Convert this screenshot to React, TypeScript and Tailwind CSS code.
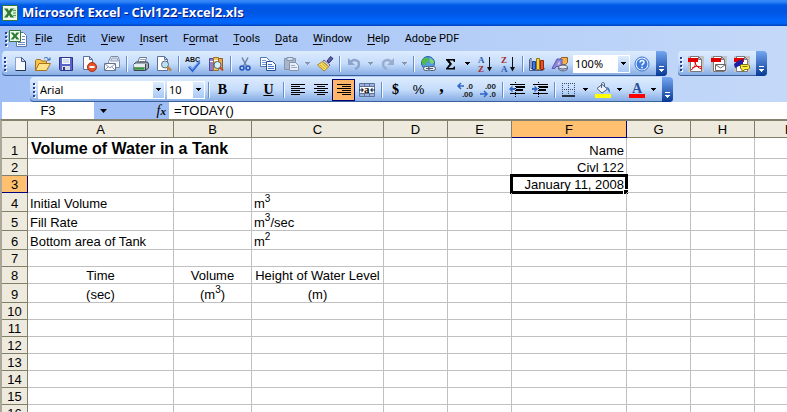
import React from "react";

type Kids = { children: React.ReactNode };

/* ---------- icons ---------- */

function Icon({ children, size = 16 }: Kids & { size?: number }) {
  return (
    <svg width={size} height={size} viewBox="0 0 16 16" fill="none" aria-hidden="true" className="shrink-0 overflow-visible">
      {children}
    </svg>
  );
}

const NewIcon = () => (
  <Icon>
    <path d="M3.5 1.5h6l4 4v9h-10z" fill="#f6faff" stroke="#8ba3c9" />
    <path d="M13.5 5v9.5h-10" stroke="#26344f" />
    <path d="M9.5 1.5v4h4z" fill="#c9d8ee" stroke="#44597f" />
  </Icon>
);
const OpenIcon = () => (
  <Icon>
    <path d="M.5 14.5v-10l1-1h4l1 1.500h5v3" fill="#f5c64a" stroke="#a8701a" />
    <path d="M.5 14.500 4 7.500h11.500l-4 7z" fill="#ffe28a" stroke="#a8701a" />
    <path d="M9 2.500c2-1.800 4-1 5 1.500M12 4h3V1.500" stroke="#2c5b9e" />
  </Icon>
);
const SaveIcon = () => (
  <Icon>
    <path d="M1.500 1.500h13v13h-12l-1-1z" fill="#5962c8" stroke="#30358c" />
    <path d="M4 2h8v6H4z" fill="#f4f7ff" />
    <path d="M5 4h6M5 6h6" stroke="#b6c3e6" />
    <path d="M4 10h8v4H4z" fill="#d7d9e4" />
    <path d="M5 11h2v3H5z" fill="#30358c" />
  </Icon>
);
const PermissionIcon = () => (
  <Icon>
    <path d="M2.500.500h6l3 3v10h-9z M8.500.500v3h3" fill="#fff" stroke="#5b719c" />
    <circle cx="11" cy="11" r="4.500" fill="#e3542c" stroke="#b02d10" />
    <path d="M8.500 11h5" stroke="#fff" strokeWidth="2" />
  </Icon>
);
const MailIcon = () => (
  <Icon>
    <path d="M4.500 5.500 7 .500h7l1.500 4v7H4.500z" fill="#f4f7fd" stroke="#7d8ba7" />
    <path d="M6.500 5 8 2h5l1.500 3z" fill="#d3deef" stroke="#93a2be" />
    <path d="M.500 7.500h11v7H.500z" fill="#fff" stroke="#65738f" />
    <path d="m1 8 5 4 5-4M1 14l3.500-3.500M11 14l-3.500-3.500" stroke="#8896b2" />
  </Icon>
);
const PrintIcon = () => (
  <Icon>
    <path d="M4.500 7 6.500 1.500h7L12 7z" fill="#fff" stroke="#6b7893" />
    <path d="M7 3.500h5M6.500 5.500h5" stroke="#9aa6bd" />
    <path d="M1 8l2.500-2h11L15.500 8v4l-3 2.500H1z" fill="#9ea9b4" stroke="#39434f" />
    <path d="M1 8h11.500v3H1z" fill="#e6ebee" />
    <path d="M2 12.500h9" stroke="#2f9a2a" strokeWidth="2" />
    <path d="M12.500 8v6" stroke="#39434f" />
  </Icon>
);
const PreviewIcon = () => (
  <Icon>
    <path d="M1.500.500h7l3 3v11h-10z M8.500.500v3h3" fill="#fff" stroke="#5b719c" />
    <circle cx="9" cy="8.500" r="3.500" fill="#b9e0f3" stroke="#5a6c7b" />
    <path d="m11.500 11 3.500 3.500" stroke="#c58436" strokeWidth="2.500" />
  </Icon>
);
const SpellIcon = () => (
  <Icon>
    <text x="0" y="6" fontSize="7" fontWeight="700" fill="#111" className="font-['Liberation_Sans',sans-serif]">ABC</text>
    <path d="m4 10.500 3.500 4L14.500 6" stroke="#2c66d4" strokeWidth="2.500" />
    <path d="m4 10 3.500 3.500L14 5.500" stroke="#7eabf3" />
  </Icon>
);
const ResearchIcon = () => (
  <Icon>
    <path d="M1.500 2.500h4v12h-4z" fill="#8c7fd0" stroke="#574a9c" />
    <path d="M5.500 1.500h5v13h-5z" fill="#f0c763" stroke="#a07322" />
    <path d="M10.500 2.500h4v10h-4z" fill="#e9a64d" stroke="#94601f" />
    <path d="M2 5.500h3M6 4.500h4" stroke="#fff" />
    <circle cx="9.500" cy="9" r="3.500" fill="#d6effa" stroke="#51606e" />
    <path d="m12 11.500 3 3" stroke="#c04d21" strokeWidth="2" />
  </Icon>
);
const CutIcon = () => (
  <Icon>
    <path d="M5 1.500 9.500 10M11 1.500 6.500 10" stroke="#6f82a5" strokeWidth="1.500" />
    <circle cx="5" cy="12" r="2" stroke="#1f55b8" strokeWidth="1.500" />
    <circle cx="11" cy="12" r="2" stroke="#1f55b8" strokeWidth="1.500" />
  </Icon>
);
const CopyIcon = () => (
  <Icon>
    <path d="M.500 1.500h6l3 3v6h-9z" fill="#fff" stroke="#5177bd" />
    <path d="M2 4.500h4M2 6.500h5M2 8.500h5" stroke="#6f94d2" />
    <path d="M6.500 5.500h6l3 3v6h-9z" fill="#fff" stroke="#274f9c" />
    <path d="M8 8.500h4M8 10.500h6M8 12.500h6" stroke="#4878c8" />
  </Icon>
);
const PasteIcon = () => (
  <Icon>
    <path d="M1.500 2.500h11v11h-11z" fill="#a9b5ca" stroke="#8593ad" />
    <path d="M4 1.500h6v3H4z" fill="#d7deea" stroke="#8593ad" />
    <path d="M6.500 6.500h6l3 3v5h-9z" fill="#e8edf6" stroke="#8593ad" />
    <path d="M8 9.500h4M8 11.500h6" stroke="#9dabc4" />
  </Icon>
);
const PainterIcon = () => (
  <Icon>
    <path d="m10 5 3.500-4.500L16 2.500 12 7z" fill="#5a5aa8" stroke="#33336e" />
    <path d="m7 4 6 5-1.500 1.500-6-5z" fill="#d9d9e6" stroke="#66668c" />
    <path d="M5.500 5.500 .500 9l6.500 6c2-1 3.500-3 4.500-4.500z" fill="#f7dd62" stroke="#a8842a" />
    <path d="m3 9 5 4M5 7.500l5 4" stroke="#cfa635" />
  </Icon>
);
const UndoIcon = () => (
  <Icon>
    <path d="M4 7c3-5 9-3 9 1 0 2-1 4-4 5" stroke="#8fa4cb" strokeWidth="2.500" />
    <path d="M2 2v7h7z" fill="#8fa4cb" />
  </Icon>
);
const RedoIcon = () => (
  <Icon>
    <path d="M12 7C9 2 3 4 3 8c0 2 1 4 4 5" stroke="#9aaccf" strokeWidth="2.500" />
    <path d="M14 2v7H7z" fill="#9aaccf" />
  </Icon>
);
const LinkIcon = () => (
  <Icon>
    <circle cx="8" cy="7" r="6.500" fill="#4f9be6" stroke="#2560a8" />
    <path d="M3 3c3-2.500 6-1 6 1S6 6 6 8s-3 1-4-1 0-3 1-4z" fill="#51b948" />
    <path d="M10 2c3 1 4 3 4 5l-3 1-1.500-3z" fill="#7ed567" />
    <rect x="3.500" y="10.500" width="6" height="4" rx="2" fill="#e5ebf3" stroke="#4c5b70" />
    <rect x="8.500" y="10.500" width="7" height="4" rx="2" fill="#e5ebf3" stroke="#4c5b70" />
    <path d="M6 12.500h7" stroke="#4c5b70" />
  </Icon>
);
const SumIcon = () => (
  <Icon>
    <path d="M3 3h9v3h-1l-1-1.500H6.500L9 8l-3.500 4H10l1-1.500h1V13.500H3V12.500L6.500 8 3 4z" fill="#000" />
  </Icon>
);
const SortIcon = ({ top, bottom, topFill, bottomFill }: { top: string; bottom: string; topFill: string; bottomFill: string }) => (
  <Icon>
    <g className="font-['Liberation_Serif',serif]" fontSize="9" fontWeight="700">
      <text x="1" y="7" fill={topFill}>{top}</text>
      <text x="1" y="16" fill={bottomFill}>{bottom}</text>
    </g>
    <path d="M12.500 1v11" stroke="#111" />
    <path d="M10 11h5l-2.500 4.500z" fill="#111" />
  </Icon>
);
const ChartIcon = () => (
  <Icon>
    <path d="M.500 3.500 2 2v10.500h13.500L14 14.500H.500z" fill="#dbe4f5" stroke="#4a5d8a" />
    <path d="M3.500 5.500h3v8h-3z" fill="#3f77df" stroke="#1d3f92" />
    <path d="M7.500 2.500h3v11h-3z" fill="#f8d13e" stroke="#9b7413" />
    <path d="M11.500 4.500h3v9h-3z" fill="#e8552d" stroke="#92290f" />
  </Icon>
);
const DrawIcon = () => (
  <Icon>
    <path d="M7.500 3.500 9.500 1.500h6v5l-2 2h-6z" fill="#f0b14b" stroke="#94601f" />
    <path d="m5 3-5 9.500h3l1-2h3v2h3V3z" fill="#8c85d8" stroke="#5f59b3" />
    <path d="M5.500 8.500 7.500 5v3.500z" fill="#e6ecfa" />
    <path d="M6.500 11v2c1.500 2.500 7.500 2.500 9 0v-2" fill="#b7c2d8" stroke="#56617a" />
    <ellipse cx="11" cy="11" rx="4.500" ry="2" fill="#e3e8f3" stroke="#56617a" />
  </Icon>
);
const HelpIcon = () => (
  <Icon>
    <circle cx="8" cy="8" r="7" fill="#f2f7ff" stroke="#3a6fc8" />
    <circle cx="8" cy="8" r="5.500" fill="#3e7de0" />
    <path d="M6 6.500C6 3.500 10.500 4 10 6.500 9.800 7.800 8 8 8 9.500" stroke="#fff" strokeWidth="1.500" />
    <path d="M7.200 10.800h1.600v1.500H7.200z" fill="#fff" />
  </Icon>
);
const AlignIcon = ({ d }: { d: string }) => (
  <Icon>
    <path d={d} stroke="#000" shapeRendering="crispEdges" />
  </Icon>
);
const MergeIcon = () => (
  <Icon>
    <path d="M.500 1.500h15v13H.500z" fill="#fff" stroke="#5c7197" />
    <path d="M1 3h14M1 13h14" stroke="#9cb2dc" strokeWidth="2" />
    <path d="M5.500 1v3M10.500 1v3M5.500 12v3M10.500 12v3M1 4.500h14M1 11.500h14" stroke="#5c7197" />
    <path d="M0 8h4M12 8h4" stroke="#1f2d4f" />
    <path d="M2.500 5.500 5 8l-2.500 2.500zM13.500 5.500 11 8l2.500 2.500z" fill="#1f2d4f" />
    <text x="5" y="11" fontSize="11" fontWeight="700" fill="#111" className="font-['Liberation_Serif',serif]">a</text>
  </Icon>
);
const DecimalIcon = ({ top, bottom, left }: { top: string; bottom: string; left: boolean }) => (
  <Icon>
    <g className="font-['Liberation_Sans',sans-serif]" fontSize="8" fontWeight="700" fill="#222" textAnchor="end">
      <text x="16" y="7">{top}</text>
      <text x="16" y="15">{bottom}</text>
    </g>
    {left ? (
      <path d="M7 4H1.500M4 1 1 4l3 3" stroke="#2f67c9" strokeWidth="1.500" />
    ) : (
      <path d="M0 12h6.500M4 9l3 3-3 3" stroke="#2f67c9" strokeWidth="1.500" />
    )}
  </Icon>
);
const IndentIcon = ({ out }: { out?: boolean }) => (
  <Icon>
    <path d="M1 2.500h15M7 4.500h9M7 5.500h9M7 7.500h7M7 8.500h7M1 11.500h15" stroke="#000" shapeRendering="crispEdges" />
    <path d="M6.500 0v16" stroke="#000" strokeDasharray="1 1" />
    <path d={out ? "M6 7H2" : "M0 7h3"} stroke="#2f67c9" strokeWidth="2" />
    <path d={out ? "M3.500 3.500 0 7l3.500 3.500z" : "M2.500 3.500 6 7l-3.500 3.500z"} fill="#2f67c9" />
  </Icon>
);
const BordersIcon = () => (
  <Icon>
    <path d="M1.500 1v12M7.500 1v12M13.500 1v12M1 1.500h13M1 7.500h13" stroke="#3b4c6e" strokeDasharray="1 1" />
    <path d="M1 14h13" stroke="#000" strokeWidth="1.500" />
  </Icon>
);
const FillIcon = () => (
  <Icon>
    <path d="m2 6.500 5-4 5.500 4.500L7 11z" fill="#eef3fb" stroke="#4e5f80" />
    <path d="M6.500 6V2c0-2 3-2 3 0v2" stroke="#4e5f80" />
    <path d="M11 5c3 0 4 2 4 6-1-1-2-2-2.500-4z" fill="#3f73d0" />
    <path d="M0 12h16v4H0z" fill="#ff0" />
  </Icon>
);
const FontColorIcon = () => (
  <Icon>
    <text x="8" y="11" fontSize="14" fontWeight="700" fill="#2d4f97" textAnchor="middle" className="font-['Liberation_Serif',serif]">A</text>
    <path d="M0 12h16v4H0z" fill="#f00" />
  </Icon>
);
const PdfIcon = ({ kind }: { kind: "pdf" | "mail" | "review" }) => (
  <Icon>
    <path d="M0 0h16v16H0z" fill="#c3c3c3" />
    <path d="M2.500.500h8l3 3v12h-11z M10.500.500v3h3" fill="#fff" stroke="#77777c" />
    <path d="M0 2h10v4H0z" fill="#e00000" />
    {kind === "pdf" && <path d="M7 6c1 4 3 6 7 7M7 6c1 4-1 6-4 8M4 12c3-2 6-2 10-1" stroke="#e00000" />}
    {kind === "mail" && (
      <>
        <path d="M4.500 8.500h10v6h-10z" fill="#fff" stroke="#666" />
        <path d="m5 9 4.500 3L14 9" stroke="#666" />
      </>
    )}
    {kind === "review" && (
      <>
        <path d="m0 8 4-3 5-2v6L5 10l-4 2z" fill="#1a1fa8" />
        <path d="M7 8.500h7l1.500 1.500v2L14 13.500h-3L8 15.500v-2l-1.500-1V10z" fill="#ffef3a" stroke="#7c7313" />
        <path d="M8.500 10.500h5" stroke="#7c7313" />
      </>
    )}
  </Icon>
);
const ExcelIcon = () => (
  <Icon>
    <path d="M.500.500h15v15H.500z" fill="#f3f8ee" stroke="#2f7a35" />
    <path d="M10 3h4v10h-4" fill="#d3e6cf" />
    <path d="M10 5.500h4M10 8h4M10 10.500h4" stroke="#5aa05c" />
    <path d="M2 3h9v10H2z" fill="#e3f1df" />
    <path d="M2 3.500h3.500L7 6l1.500-2.500H12L8.500 8l3.500 4.500H8.500L7 10l-1.500 2.500H2L5.500 8z" fill="#2c7c34" />
  </Icon>
);
const MenuExcelIcon = () => (
  <svg width="18" height="17" viewBox="0 0 18 17" fill="none" aria-hidden="true">
    <path d="M7.500 2.500h7l3 3v11h-10z" fill="#fff" stroke="#5876ac" />
    <path d="M13 6.500h3M13 9.500h3M9 12.500h7M9 14.500h7" stroke="#6b8ac0" />
    <path d="M.500.500h11v11H.500z" fill="#f3f8ee" stroke="#2f7a35" />
    <path d="M1.500 2.500h3L6 4.500l1.500-2h3L7.500 6l3 3.500h-3L6 7.500l-1.500 2h-3L4.500 6z" fill="#2c7c34" />
  </svg>
);

/* ---------- toolbar parts ---------- */

function Grip({ wide }: { wide?: boolean }) {
  return (
    <div className={`${wide ? "w-2" : "w-1.5"} flex h-full shrink-0 flex-col items-center justify-center gap-0.5`}>
      {[0, 1, 2, 3].map((n) => (
        <i key={n} className="size-0.5 bg-[#27418e] shadow-[1px_1px_0_#fff]" />
      ))}
    </div>
  );
}

function Sep() {
  return (
    <div className="flex w-1.5 shrink-0 justify-center">
      <i className="h-4 w-px bg-[#6a8ccb] shadow-[1px_0_0_#f1f9ff]" />
    </div>
  );
}

function Tool({ label, active, children }: Kids & { label: string; active?: boolean }) {
  return (
    <button
      type="button"
      aria-label={label}
      aria-pressed={active}
      className={`flex h-[22px] w-[23px] shrink-0 items-center justify-center ${active ? "border border-[#000080] bg-[#ffb668]" : ""}`}
    >
      {children}
    </button>
  );
}

function Triangle({ color = "#000" }: { color?: string }) {
  return (
    <svg width="5" height="3" viewBox="0 0 5 3" aria-hidden="true" shapeRendering="crispEdges">
      <path d="M0 0h5v1H4v1H3v1H2V2H1V1H0z" fill={color} />
    </svg>
  );
}

function Drop({ label, dim }: { label: string; dim?: boolean }) {
  return (
    <button type="button" aria-label={label} className="flex h-[22px] w-[11px] shrink-0 items-center justify-center">
      <Triangle color={dim ? "#8794ae" : "#000"} />
    </button>
  );
}

function Combo({ label, value, width }: { label: string; value: string; width: string }) {
  return (
    <label className={`relative flex h-[18px] shrink-0 items-center bg-white ${width}`}>
      <select
        aria-label={label}
        defaultValue={value}
        className="h-full w-full appearance-none bg-transparent pl-0.5 font-['Noto_Sans',sans-serif] text-[11px] leading-4"
      >
        <option>{value}</option>
      </select>
      <span className="pointer-events-none absolute inset-y-px right-px flex w-[11px] items-center justify-center bg-linear-to-b from-[#ddecfe] to-[#a9c8f5]">
        <Triangle />
      </span>
    </label>
  );
}

function Cap() {
  return (
    <button
      type="button"
      aria-label="Toolbar options"
      className="flex h-full w-[11px] shrink-0 flex-col items-center justify-end gap-0.5 rounded-r-sm bg-linear-to-b from-[#75a6f1] to-[#053995] pb-1"
    >
      <i className="h-px w-[5px] bg-white" />
      <Triangle color="#fff" />
    </button>
  );
}

function Bar({ label, children }: Kids & { label: string }) {
  return (
    <div
      role="toolbar"
      aria-label={label}
      className="flex h-[25px] shrink-0 items-center rounded-sm bg-linear-to-b from-[#ddecfe] via-[#c5dcfb] to-[#81a9e2] shadow-[inset_0_-1px_0_#3b619c]"
    >
      {children}
    </div>
  );
}

/* ---------- data ---------- */

const menus: [string, string, string][] = [
  ["", "F", "ile"],
  ["", "E", "dit"],
  ["", "V", "iew"],
  ["", "I", "nsert"],
  ["F", "o", "rmat"],
  ["", "T", "ools"],
  ["", "D", "ata"],
  ["", "W", "indow"],
  ["", "H", "elp"],
  ["Ado", "b", "e PDF"],
];

const columns = [
  { name: "A", width: "w-[146px]" },
  { name: "B", width: "w-[78px]" },
  { name: "C", width: "w-[132px]" },
  { name: "D", width: "w-[64px]" },
  { name: "E", width: "w-[64px]" },
  { name: "F", width: "w-[115px]" },
  { name: "G", width: "w-[64px]" },
  { name: "H", width: "w-[64px]" },
  { name: "I", width: "w-[64px]" },
];

const Sup = ({ children }: Kids) => <sup className="relative -top-[6px] align-baseline text-[10px] leading-none">{children}</sup>;

const cells: Record<string, React.ReactNode> = {
  A1: "Volume of Water in a Tank",
  F1: "Name",
  F2: "Civl 122",
  F3: "January 11, 2008",
  A4: "Initial Volume",
  A5: "Fill Rate",
  A6: "Bottom area of Tank",
  C4: <>m<Sup>3</Sup></>,
  C5: <>m<Sup>3</Sup>/sec</>,
  C6: <>m<Sup>2</Sup></>,
  A8: "Time",
  B8: "Volume",
  C8: "Height of Water Level",
  A9: "(sec)",
  B9: <>(m<Sup>3</Sup>)</>,
  C9: "(m)",
};

const rowHeight = (r: number) => {
  if (r === 1) return "h-[21px]";
  return r === 4 || r === 5 || r === 6 || r === 9 ? "h-[19px]" : "h-[17px]";
};

function Cell({ col, row }: { col: string; row: number }) {
  const id = col + row;
  const title = id === "A1";
  const align = col === "F" ? "text-right" : row > 7 ? "text-center" : "text-left";
  return (
    <td
      colSpan={title ? 2 : 1}
      className={`relative border-r border-b border-[#c0c0c0] px-0.5 py-0 align-bottom whitespace-nowrap ${align} ${
        title ? "text-base leading-[18px] font-bold" : "leading-[14px]"
      }`}
    >
      {title ? <span className="pl-px">{cells[id]}</span> : cells[id]}
      {id === "F3" && (
        <span className="pointer-events-none absolute -inset-0.5 border-[3px] border-black">
          <i className="absolute -right-[3px] -bottom-[3px] size-[5px] border-t border-l border-white bg-black" />
        </span>
      )}
    </td>
  );
}

/* ---------- page ---------- */

export default function App() {
  return (
    <div className="flex h-screen flex-col overflow-hidden bg-white font-['Liberation_Sans',Arial,sans-serif] text-[13px] text-black">
      <header className="flex h-[26px] shrink-0 items-center gap-1 bg-[linear-gradient(#3c8cf8_0,#2a80f5_8%,#0058e6_20%,#0055e3_50%,#0066ff_80%,#0062f5_90%,#0042b8_100%)] pl-0.5">
        <ExcelIcon />
        <h1 className="font-['Open_Sans',sans-serif] text-[13px] font-bold text-white [text-shadow:1px_1px_0_#0a1883]">
          Microsoft Excel - Civl122-Excel2.xls
        </h1>
      </header>

      <div className="shrink-0 bg-linear-to-r from-[#9ebef5] to-[#c4d9f9]">
        <nav className="flex h-[25px] items-center pl-[3px] font-['Roboto',sans-serif] text-[11px]">
          <Grip />
          <MenuExcelIcon />
          <div className="flex">
            {menus.map(([a, b, c]) => (
              <button type="button" key={a + b + c} className="pl-2 pr-[7px] leading-5">
                {a}
                <u className="underline-offset-2">{b}</u>
                {c}
              </button>
            ))}
          </div>
        </nav>

        <div className="flex h-[26px] gap-[11px] pl-0.5">
          <Bar label="Standard">
            <Grip />
            <Tool label="New"><NewIcon /></Tool>
            <Tool label="Open"><OpenIcon /></Tool>
            <Tool label="Save"><SaveIcon /></Tool>
            <Tool label="Permission"><PermissionIcon /></Tool>
            <Tool label="E-mail"><MailIcon /></Tool>
            <Sep />
            <Tool label="Print"><PrintIcon /></Tool>
            <Tool label="Print Preview"><PreviewIcon /></Tool>
            <Sep />
            <Tool label="Spelling"><SpellIcon /></Tool>
            <Tool label="Research"><ResearchIcon /></Tool>
            <Sep />
            <Tool label="Cut"><CutIcon /></Tool>
            <Tool label="Copy"><CopyIcon /></Tool>
            <Tool label="Paste"><PasteIcon /></Tool>
            <Drop label="Paste options" dim />
            <Tool label="Format Painter"><PainterIcon /></Tool>
            <Sep />
            <Tool label="Undo"><UndoIcon /></Tool>
            <Drop label="Undo history" dim />
            <Tool label="Redo"><RedoIcon /></Tool>
            <Drop label="Redo history" dim />
            <Sep />
            <Tool label="Insert Hyperlink"><LinkIcon /></Tool>
            <Tool label="AutoSum"><SumIcon /></Tool>
            <Drop label="AutoSum options" />
            <Tool label="Sort Ascending"><SortIcon top="A" bottom="Z" topFill="#2f5cae" bottomFill="#a32a2a" /></Tool>
            <Tool label="Sort Descending"><SortIcon top="Z" bottom="A" topFill="#a32a2a" bottomFill="#2f5cae" /></Tool>
            <Sep />
            <Tool label="Chart Wizard"><ChartIcon /></Tool>
            <Tool label="Drawing"><DrawIcon /></Tool>
            <div className="w-0.5 shrink-0" />
            <Combo label="Zoom" value="100%" width="w-[57px]" />
            <Tool label="Help"><HelpIcon /></Tool>
            <div className="w-[3px] shrink-0" />
            <Cap />
          </Bar>
          <Bar label="PDFMaker">
            <Grip />
            <Tool label="Convert to Adobe PDF"><PdfIcon kind="pdf" /></Tool>
            <Tool label="Convert and e-mail"><PdfIcon kind="mail" /></Tool>
            <Tool label="Convert and review"><PdfIcon kind="review" /></Tool>
            <div className="w-[3px] shrink-0" />
            <Cap />
          </Bar>
        </div>

        <div className="flex pl-[30px]">
          <Bar label="Formatting">
            <Grip wide />
            <Combo label="Font" value="Arial" width="w-[127px]" />
            <div className="w-0.5 shrink-0" />
            <Combo label="Font size" value="10" width="w-[38px]" />
            <Sep />
            <Tool label="Bold"><b className="font-['Liberation_Serif',serif] text-sm">B</b></Tool>
            <Tool label="Italic"><i className="font-['Liberation_Serif',serif] text-sm font-bold">I</i></Tool>
            <Tool label="Underline"><u className="font-['Liberation_Serif',serif] text-sm font-bold">U</u></Tool>
            <Sep />
            <Tool label="Align Left"><AlignIcon d="M1 2.500h14M1 4.500h9M1 6.500h14M1 8.500h9M1 10.500h14M1 12.500h9" /></Tool>
            <Tool label="Center"><AlignIcon d="M1 2.500h14M4 4.500h8M1 6.500h14M4 8.500h8M1 10.500h14M4 12.500h8" /></Tool>
            <Tool label="Align Right" active><AlignIcon d="M1 2.500h14M6 4.500h9M1 6.500h14M6 8.500h9M1 10.500h14M6 12.500h9" /></Tool>
            <Tool label="Merge and Center"><MergeIcon /></Tool>
            <Sep />
            <Tool label="Currency Style"><b className="font-['Liberation_Serif',serif] text-sm">$</b></Tool>
            <Tool label="Percent Style"><span className="font-['Liberation_Sans',sans-serif] text-[13px]">%</span></Tool>
            <Tool label="Comma Style"><b className="pb-2 font-['Liberation_Serif',serif] text-lg leading-3">,</b></Tool>
            <Tool label="Increase Decimal"><DecimalIcon top=".0" bottom=".00" left /></Tool>
            <Tool label="Decrease Decimal"><DecimalIcon top=".00" bottom=".0" left={false} /></Tool>
            <Sep />
            <Tool label="Decrease Indent"><IndentIcon out /></Tool>
            <Tool label="Increase Indent"><IndentIcon /></Tool>
            <Sep />
            <Tool label="Borders"><BordersIcon /></Tool>
            <Drop label="Border options" />
            <Tool label="Fill Color"><FillIcon /></Tool>
            <Drop label="Fill options" />
            <Tool label="Font Color"><FontColorIcon /></Tool>
            <Drop label="Font colour options" />
            <div className="w-[3px] shrink-0" />
            <Cap />
          </Bar>
        </div>
      </div>

      <div className="flex h-[17px] shrink-0 bg-[#9ebef5] pl-0.5">
        <input aria-label="Name Box" defaultValue="F3" className="w-[92px] bg-white text-center outline-none" />
        <button type="button" aria-label="Named cells" className="flex w-[18px] items-center justify-center">
          <svg width="7" height="4" viewBox="0 0 7 4" aria-hidden="true"><path d="M0 0h7L3.500 4z" fill="#000" /></svg>
        </button>
        <button type="button" aria-label="Insert Function" className="w-[57px] pr-[3px] text-right font-['Liberation_Serif',serif] text-sm leading-4 italic">
          f<span className="text-[11px] font-bold">x</span>
        </button>
        <input aria-label="Formula" defaultValue="=TODAY()" className="min-w-0 grow bg-white pl-[5px] outline-none" />
      </div>

      <main className="min-h-0 grow overflow-hidden border-t-2 border-l-2 border-t-[#85816f] border-l-[#aca899]">
        <table className="w-[817px] table-fixed border-separate border-spacing-0">
          <colgroup>
            <col className="w-[26px]" />
            {columns.map((c) => (
              <col key={c.name} className={c.width} />
            ))}
          </colgroup>
          <thead>
            <tr className="h-[17px] bg-[#eeeade] leading-[14px]">
              <th aria-label="Select all" className="border-r border-b border-[#808068] p-0" />
              {columns.map((c) => (
                <th
                  key={c.name}
                  scope="col"
                  className={`border-r border-b p-0 align-bottom font-normal ${c.name === "F" ? "border-[#000080] bg-[#ffc06f]" : "border-[#808068]"}`}
                >
                  {c.name}
                </th>
              ))}
            </tr>
          </thead>
          <tbody>
            {Array.from({ length: 16 }, (_, i) => i + 1).map((r) => (
              <tr key={r} className={rowHeight(r)}>
                <th
                  scope="row"
                  className={`border-r border-b p-0 align-bottom leading-[14px] font-normal ${r === 3 ? "border-[#000080] bg-[#ffc06f]" : "border-[#808068] bg-[#eeeade]"}`}
                >
                  {r}
                </th>
                {columns
                  .filter((c) => !(r === 1 && c.name === "B"))
                  .map((c) => (
                    <Cell key={c.name} col={c.name} row={r} />
                  ))}
              </tr>
            ))}
          </tbody>
        </table>
      </main>
    </div>
  );
}
